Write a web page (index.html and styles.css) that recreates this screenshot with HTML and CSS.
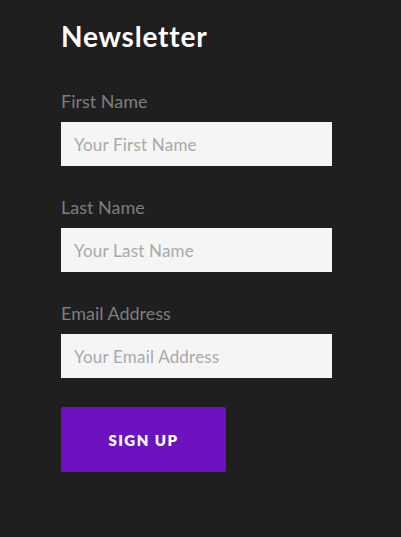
FILE: index.html
```html
<!DOCTYPE html>
<html lang="en">
<head>
  <meta charset="UTF-8">
  <meta name="viewport" content="width=device-width, initial-scale=1.0">
  <title>Newsletter</title>
  <link rel="stylesheet" href="styles.css">
</head>
<body>
  <div class="newsletter">
    <h2>Newsletter</h2>
    <form class="signup-form">
      <div class="field">
        <label for="first_name">First Name</label>
        <input type="text" id="first_name" name="first_name" placeholder="Your First Name">
      </div>
      <div class="field">
        <label for="last_name">Last Name</label>
        <input type="text" id="last_name" name="last_name" placeholder="Your Last Name">
      </div>
      <div class="field">
        <label for="email">Email Address</label>
        <input type="email" id="email" name="email" placeholder="Your Email Address">
      </div>
      <button type="submit">Sign up</button>
    </form>
  </div>
</body>
</html>
```

FILE: styles.css
```css
body {
  font-family: "Lato", "Open Sans", sans-serif;
  margin: 0;
  background-color: #1f1f1f;
  height: 537px;
}

.newsletter {
  width: 271px;
  padding: 18px 0 0 61px;
}

h2 {
  color: #ffffff;
  font-size: 28px;
  font-weight: 700;
  letter-spacing: 0.8px;
  line-height: 36px;
  margin: 0 0 36px;
}

.field {
  display: flex;
  flex-direction: column;
  margin-bottom: 30px;
}

label {
  color: #7d7d7d;
  font-size: 18px;
  line-height: 22px;
  margin-bottom: 10px;
}

input {
  font-family: "Lato", "Open Sans", sans-serif;
  height: 44px;
  padding: 0 13px;
  border: none;
  background: #f5f5f5;
  font-size: 17px;
  letter-spacing: 0.2px;
  color: #555;
  box-sizing: border-box;
  outline: none;
}

input::placeholder {
  color: #a9a9a9;
}

button {
  display: block;
  width: 165px;
  height: 65px;
  margin-top: -1px;
  border: none;
  border-radius: 2px;
  background: #6d12c1;
  color: #ffffff;
  font-family: "Lato", sans-serif;
  font-weight: 800;
  font-size: 15px;
  letter-spacing: 1.5px;
  text-transform: uppercase;
  cursor: pointer;
}
```
